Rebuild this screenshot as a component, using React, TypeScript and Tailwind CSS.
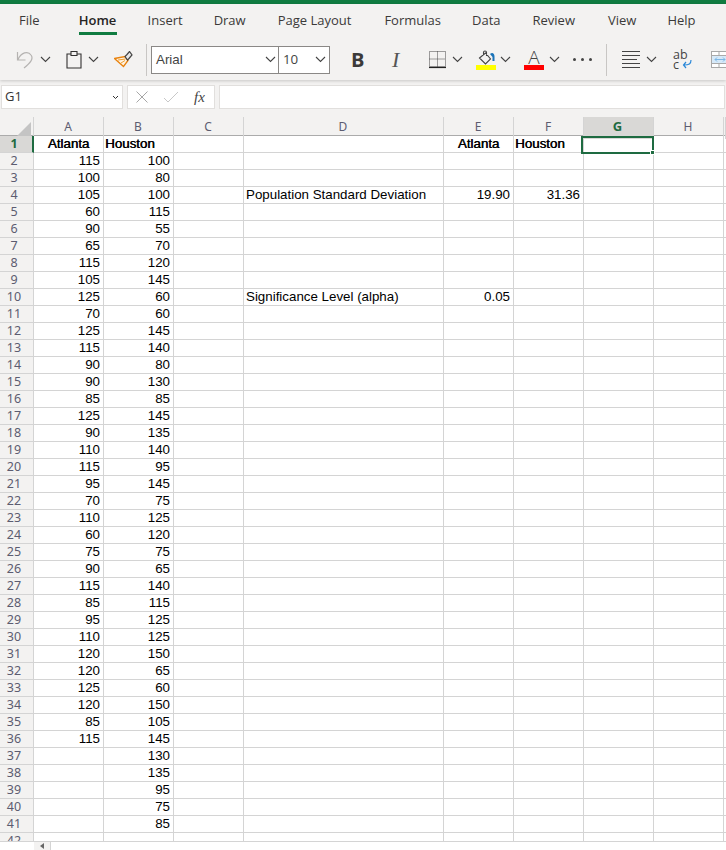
import React from 'react';

const tabs = [
  { label: 'File', gap: 'mr-[39px]' },
  { label: 'Home', gap: 'mr-[31px]' },
  { label: 'Insert', gap: 'mr-[31px]' },
  { label: 'Draw', gap: 'mr-[32px]' },
  { label: 'Page Layout', gap: 'mr-[33px]' },
  { label: 'Formulas', gap: 'mr-[31px]' },
  { label: 'Data', gap: 'mr-[32px]' },
  { label: 'Review', gap: 'mr-[33px]' },
  { label: 'View', gap: 'mr-[31px]' },
  { label: 'Help', gap: 'mr-[32px]' },
];
const columns = ['A', 'B', 'C', 'D', 'E', 'F', 'G', 'H', ''];

const atlanta = [115, 100, 105, 60, 90, 65, 115, 105, 125, 70, 125, 115, 90, 90, 85, 125, 90, 110, 115, 95, 70, 110, 60, 75, 90, 115, 85, 95, 110, 120, 120, 125, 120, 85, 115];
const houston = [100, 80, 100, 115, 55, 70, 120, 145, 60, 60, 145, 140, 80, 130, 85, 145, 135, 140, 95, 145, 75, 125, 120, 75, 65, 140, 115, 125, 125, 150, 65, 60, 150, 105, 145, 130, 135, 95, 75, 85];

// cells outside of columns A and B, keyed by row then column
const extras: Record<number, Record<string, { text: string; bold?: boolean; right?: boolean }>> = {
  1: {
    A: { text: 'Atlanta', bold: true },
    B: { text: 'Houston', bold: true },
    E: { text: 'Atlanta', bold: true },
    F: { text: 'Houston', bold: true },
  },
  4: {
    D: { text: 'Population Standard Deviation' },
    E: { text: '19.90', right: true },
    F: { text: '31.36', right: true },
  },
  10: {
    D: { text: 'Significance Level (alpha)' },
    E: { text: '0.05', right: true },
  },
};

const Chevron = ({ className = '' }: { className?: string }) => (
  <svg width="11" height="7" viewBox="0 0 11 7" className={`shrink-0 ${className}`}>
    <path d="M1 1l4.500 4.500L10 1" fill="none" stroke="#444" strokeWidth="1.1" />
  </svg>
);

const cellFor = (row: number, col: string) => {
  if (extras[row]?.[col]) return extras[row][col];
  if (row > 1 && col === 'A' && atlanta[row - 2] !== undefined) return { text: String(atlanta[row - 2]), right: true };
  if (row > 1 && col === 'B' && houston[row - 2] !== undefined) return { text: String(houston[row - 2]), right: true };
  return null;
};

const Row = ({ row }: { row: number }) => (
  <div className="grid h-[17px] grid-cols-[34px_70px_70px_70px_200px_70px_70px_70px_70px_1fr] grid-rows-[17px]">
    <div
      className={`flex items-center justify-center border-b border-[#d4d4d4] text-[12.5px] leading-[16px] font-['Noto_Sans',sans-serif] ${
        row === 1
          ? 'border-r-2 border-r-[#1e6b41] bg-[#d9d8d6] pr-[4px] font-bold text-[#1e6b41]'
          : 'border-r bg-[#f3f2f1] pr-[5px] text-[#5c5c70]'
      }`}
    >
      {row}
    </div>
    {columns.map((col) => {
      const cell = cellFor(row, col);
      const isHouston = cell?.bold && (col === 'B' || col === 'F');
      const isCenter = cell?.bold && !isHouston;
      return (
        <div
          key={col}
          className={`flex items-center overflow-visible whitespace-nowrap border-r border-b border-[#d4d4d4] text-[13.33px] leading-[16px] text-black ${
            cell?.right ? 'justify-end pr-[3px]' : isCenter ? 'justify-center' : isHouston ? 'justify-start pl-[1px]' : 'justify-start pl-[2px]'
          } ${cell?.bold ? '[text-shadow:0.45px_0_0_#000]' : ''}`}
        >
          {cell?.text}
        </div>
      );
    })}
  </div>
);

export default function App() {
  const rows = Array.from({ length: 42 }, (_, i) => i + 1);

  return (
    <div className="relative flex h-[850px] w-[726px] flex-col overflow-hidden bg-white font-['Liberation_Sans',Arial,sans-serif]">
      <div className="h-1 bg-[#107c41]" />

      {/* ribbon */}
      <div className="relative z-10 h-[76px] bg-[#f3f2f1] shadow-[0_1px_3px_rgba(0,0,0,0.18)]">
        <div className="flex h-[35px] items-start whitespace-nowrap pl-[19px] pt-[7px] text-[13px] text-[#3b3a39] font-['Open_Sans',sans-serif]">
          {tabs.map((t) => (
            <div key={t.label} className={`${t.gap} flex flex-col items-center`}>
              <span className={t.label === 'Home' ? 'font-semibold text-[#252423]' : ''}>{t.label}</span>
              {t.label === 'Home' && <div className="mt-[1px] h-[3px] w-[38px] bg-[#107c41]" />}
            </div>
          ))}
        </div>

        <div className="flex h-[41px] items-center *:shrink-0">
          {/* undo */}
          <svg width="18" height="20" viewBox="0 0 18 20" className="ml-[16px]">
            <path d="M1.500 2v8h8M2 9.500C5 2.500 12 0.500 15 5c3 4-1 8-7 13" fill="none" stroke="#b5b3b1" strokeWidth="1.2" />
          </svg>
          <Chevron className="ml-[6px]" />
          {/* paste */}
          <svg width="16" height="19" viewBox="0 0 16 19" className="ml-[15px]">
            <path d="M1 4h4V1.500h6V4h4v14H1zM5 4v1.500h6V4" fill="none" stroke="#323130" strokeWidth="1.1" />
          </svg>
          <Chevron className="ml-[6px]" />
          {/* format painter */}
          <svg width="19" height="17" viewBox="0 0 19 17" className="ml-[15px]">
            <path d="M0.500 7.500L11 5.500l3 4L9.500 15.500z" fill="#fff3e2" stroke="#e8820e" strokeWidth="1.3" />
            <path d="M4 9l7.500-1M7 12l4-2.500" stroke="#f0a030" strokeWidth="1" />
            <path d="M11 5.500l2.500 3.500 1.500-1.500 3-3.500-2.500-3.500-2.500 3z" fill="#e8e8e8" stroke="#444" strokeWidth="1.2" />
          </svg>
          <div className="ml-[13px] h-8 w-px bg-[#c8c6c4]" />
          {/* font selects */}
          <div className="ml-[4px] flex h-[28px] w-[179px] border border-[#8a8886] bg-white text-[13.33px] text-[#444]">
            <div className="flex w-[127px] items-center justify-between border-r border-[#8a8886] pl-[4px] pr-[2px]">
              Arial
              <Chevron />
            </div>
            <div className="flex flex-1 items-center justify-between pl-[4px] pr-[3px] font-['Open_Sans',sans-serif]">
              10
              <Chevron />
            </div>
          </div>
          <span className="ml-[21px] w-[14px] text-[20px] font-bold leading-none text-[#3b3a39] font-['Open_Sans',sans-serif]">B</span>
          <span className="ml-[27px] w-[10px] text-[22px] italic leading-none text-[#555] font-['Liberation_Serif',serif]">I</span>
          {/* borders */}
          <svg width="17" height="18" viewBox="0 0 17 18" className="ml-[27px]">
            <path d="M.5.500h16v15H.500zM8.500.500v15M.500 8h16" fill="none" stroke="#444" strokeWidth="1" strokeDasharray="1 1" />
            <path d="M0 16.500h17" stroke="#222" strokeWidth="1.2" />
          </svg>
          <Chevron className="ml-[6px]" />
          {/* fill colour */}
          <div className="ml-[13px] flex w-5 flex-col items-center">
            <svg width="17" height="15" viewBox="0 0 17 15">
              <path d="M1.500 8l6-5 5 6-5 5zM5.500 5V2.500C5.500.500 8.500.500 8.500 2.500V6" fill="none" stroke="#444" strokeWidth="1.1" />
              <path d="M12 4c2-2 4.500-1 4.500 2.500V11h-2V7z" fill="#1a73b8" />
            </svg>
            <div className="h-[5px] w-5 bg-[#ffff00]" />
          </div>
          <Chevron className="ml-[4px]" />
          {/* font colour */}
          <div className="ml-[13px] flex w-5 flex-col items-center">
            <span className="h-[15px] text-[19px] font-light leading-[15px] text-[#444] font-['Open_Sans',sans-serif]">A</span>
            <div className="h-[5px] w-5 bg-[#ff0000]" />
          </div>
          <Chevron className="ml-[5px]" />
          <div className="ml-[13px] flex gap-[5px]">
            <div className="h-[3px] w-[3px] rounded-full bg-[#444]" />
            <div className="h-[3px] w-[3px] rounded-full bg-[#444]" />
            <div className="h-[3px] w-[3px] rounded-full bg-[#444]" />
          </div>
          <div className="ml-[14px] h-8 w-px bg-[#c8c6c4]" />
          {/* align */}
          <svg width="19" height="18" viewBox="0 0 19 18" className="ml-[15px]">
            <path d="M0 .500h18M0 4.500h18M0 8.500h15M0 12.500h18M0 16.500h18" stroke="#444" strokeWidth="1" />
          </svg>
          <Chevron className="ml-[5px]" />
          {/* wrap */}
          <div className="relative ml-[16px] h-[20px] w-[18px] text-[12.5px] leading-[10px] text-[#444] font-['Open_Sans',sans-serif]">
            ab
            <br />c
            <svg width="10" height="9" viewBox="0 0 10 9" className="absolute bottom-[1px] right-[-1px]">
              <path d="M9 0c0 4-2 5-7 5M4 2L1.500 5 4 8" fill="none" stroke="#2b88d8" strokeWidth="1.2" />
            </svg>
          </div>
          {/* merge */}
          <svg width="24" height="17" viewBox="0 0 24 17" className="ml-[20px]">
            <rect x=".5" y=".5" width="23" height="16" fill="#fff" stroke="#a9a9a9" />
            <rect x="1" y="5" width="22" height="7" fill="#d6e9f8" />
            <path d="M.5 4.500h23M.5 12.500h23M8 .500v4M16 .500v4M8 12.500v4M16 12.500v4" stroke="#a9a9a9" />
            <path d="M4 8.500h10M6 6.500l-2 2 2 2M12 6.500l2 2-2 2" fill="none" stroke="#7cb7e6" />
          </svg>
        </div>
      </div>

      {/* formula bar */}
      <div className="flex h-[37px] gap-[4px] bg-[#f3f2f1] px-[1px] pb-[8px] pt-[5px]">
        <div className="flex w-[122px] items-center justify-between border border-[#e1dfdd] bg-white pl-[3px] pr-[3px] text-[13px] text-[#333] font-['Open_Sans',sans-serif]">
          G1
          <svg width="7" height="5" viewBox="0 0 7 5">
            <path d="M1 1l2.500 2.500L6 1" fill="none" stroke="#333" strokeWidth="1" />
          </svg>
        </div>
        <div className="flex w-[88px] items-center border border-[#e1dfdd] bg-white pl-[8px]">
          <svg width="12" height="12" viewBox="0 0 12 12">
            <path d="M.5.500l11 11M11.500.500l-11 11" stroke="#a6a6a6" strokeWidth="1" />
          </svg>
          <svg width="16" height="12" viewBox="0 0 16 12" className="ml-[15px]">
            <path d="M1 7l4 4L15 1" fill="none" stroke="#c8c8c8" strokeWidth="1" />
          </svg>
          <span className="ml-[15px] text-[15px] italic leading-none text-[#444] font-['Liberation_Serif',serif]">fx</span>
        </div>
        <div className="flex-1 border border-[#e1dfdd] bg-white" />
      </div>

      {/* column headers */}
      <div className="grid h-[19px] grid-cols-[34px_70px_70px_70px_200px_70px_70px_70px_70px_1fr] border-b border-[#ababab] bg-[#f3f2f1] text-[12px] text-[#5c5c70] font-['Noto_Sans',sans-serif]">
        <div className="relative border-r border-[#d4d4d4]">
          <div className="absolute bottom-[2px] right-[2px] h-0 w-0 border-b-[15px] border-l-[15px] border-b-[#c4c4c4] border-l-transparent" />
        </div>
        {columns.map((col) => (
          <div
            key={col}
            className={`flex items-center justify-center border-r border-[#d4d4d4] pb-[2px] ${col === 'G' ? 'bg-[#d9d8d6] pr-[2px] text-[13px] font-bold text-[#1e6b41]' : 'pr-[1px]'}`}
          >
            {col}
          </div>
        ))}
      </div>

      {/* sheet */}
      <div className="relative h-[705px] overflow-hidden">
        {rows.map((r) => (
          <Row key={r} row={r} />
        ))}
        {/* selected cell G1 */}
        <div className="absolute left-[581px] top-0 h-[18px] w-[73px] border-2 border-[#1e6b41]">
          <div className="absolute bottom-[-3px] right-[-3px] h-[5px] w-[5px] border border-white bg-[#1e6b41]" />
        </div>
      </div>

      {/* scrollbar strip */}
      <div className="flex h-[9px] border-t border-[#d4d4d4] bg-white pl-[34px]">
        <div className="flex w-[17px] items-center justify-center border-r border-[#d4d4d4] bg-[#f3f2f1]">
          <div className="h-0 w-0 border-y-[3px] border-r-[4px] border-y-transparent border-r-[#666]" />
        </div>
      </div>
    </div>
  );
}
